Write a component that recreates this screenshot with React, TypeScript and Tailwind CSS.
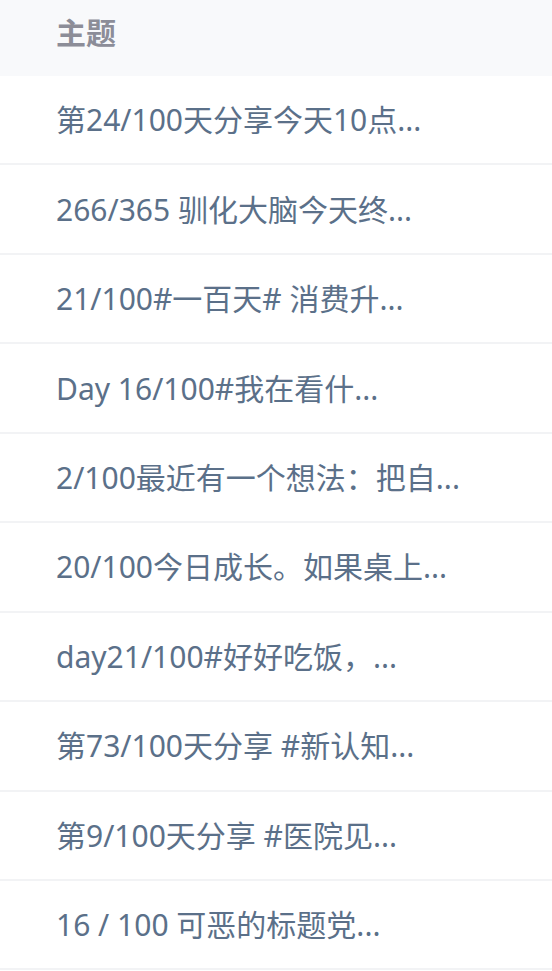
const topics = [
  "第24/100天分享今天10点...",
  "266/365 驯化大脑今天终...",
  "21/100#一百天# 消费升...",
  "Day 16/100#我在看什...",
  "2/100最近有一个想法：把自...",
  "20/100今日成长。如果桌上...",
  "day21/100#好好吃饭，...",
  "第73/100天分享 #新认知...",
  "第9/100天分享 #医院见...",
  "16 / 100 可恶的标题党...",
];

export default function App() {
  return (
    <div className="min-h-screen bg-white font-['Noto_Sans','Noto_Sans_CJK_SC',sans-serif]">
      <div className="h-[76px] bg-[#f8f9fb] pl-[56px] pt-[13px]">
        <span className="text-[30px] leading-[39px] font-semibold text-[#8c8d98]">主题</span>
      </div>
      <ul>
        {topics.map((t) => (
          <li
            key={t}
            className="flex h-[89.45px] items-center border-b-2 border-[#f2f3f5] pl-[56px] text-[30px] leading-[39px] text-[#5b7089]"
          >
            {t}
          </li>
        ))}
      </ul>
    </div>
  );
}
